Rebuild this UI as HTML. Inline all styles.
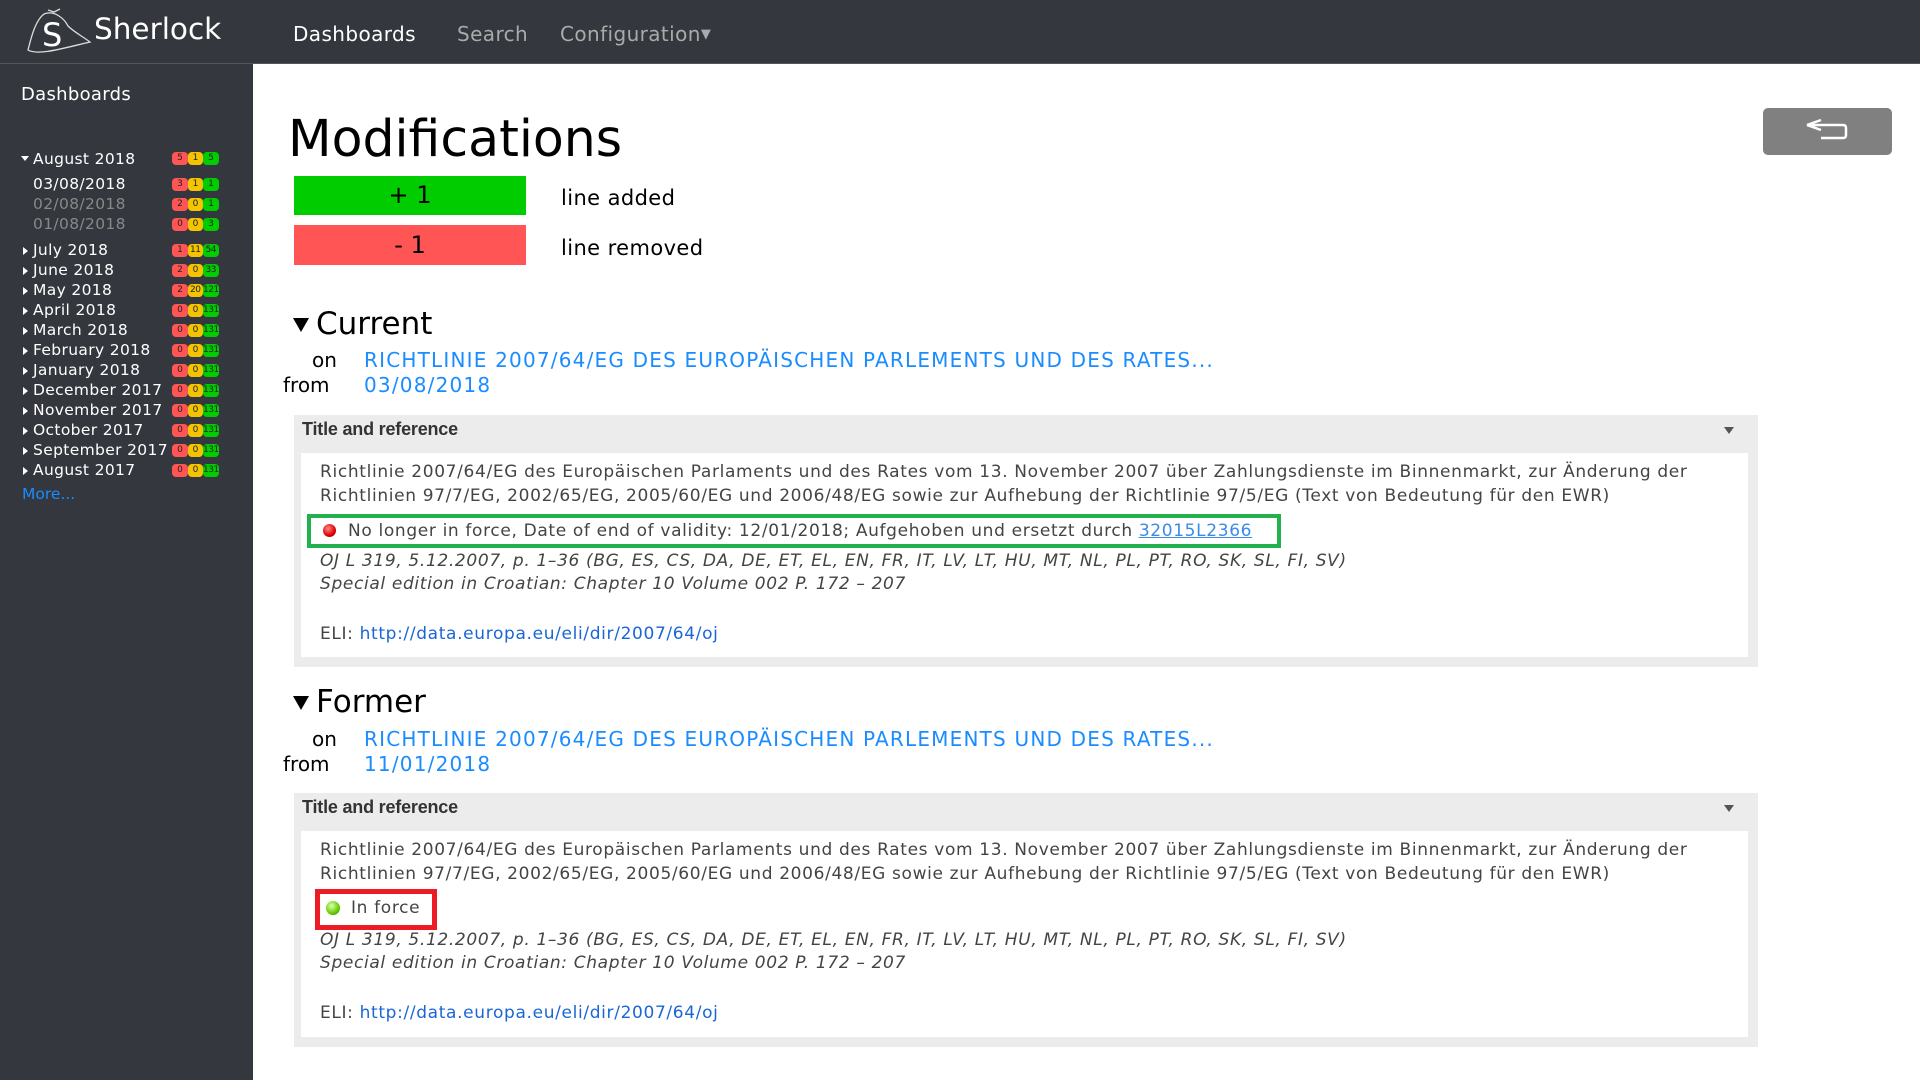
<!DOCTYPE html>
<html><head><meta charset="utf-8"><style>
*{box-sizing:border-box;margin:0;padding:0}
body{width:1920px;height:1080px;overflow:hidden;background:#fff;font-family:"DejaVu Sans","Liberation Sans",sans-serif;position:relative}
.hdr{position:absolute;left:0;top:0;width:1920px;height:64px;background:#34373d;border-bottom:1px solid #555}
.side{position:absolute;left:0;top:64px;width:253px;height:1016px;background:#34373d}
.a{position:absolute;white-space:nowrap}
.nav{color:#fff;font-size:20px;top:22px;letter-spacing:0.4px}
.mi{color:#fff;font-size:15.5px;left:33px;letter-spacing:0.35px}
.mi.t:before{content:"";position:absolute;left:-10px;top:6px;border-left:5px solid #fff;border-top:4px solid transparent;border-bottom:4px solid transparent}
.bd{position:absolute;left:172px;display:flex}
.bd span{width:15.5px;height:13px;border-radius:4px;font-size:9px;line-height:13px;text-align:center;color:#222;letter-spacing:-0.5px}
.r{background:#f55}.y{background:#f5c400}.g{background:#0c0}
.panel{position:absolute;left:294px;width:1464px;background:#ececec}
.ph{height:30px;font:bold 18px "Liberation Sans Narrow","Liberation Sans",sans-serif;color:#333;padding:4px 8px;letter-spacing:-0.2px}
.pb{position:absolute;left:7px;right:10px;top:38px;bottom:10px;background:#fff}
.tx{position:absolute;font-size:17px;color:#444;white-space:nowrap;letter-spacing:0.65px}
.it{font-style:italic}
.lk{color:#1a66d6}
.bl{color:#1a8cff;letter-spacing:1.2px}
.caret{position:absolute;right:24px;top:12px;border-top:7px solid #555;border-left:5px solid transparent;border-right:5px solid transparent}
</style></head><body>
<div class="hdr"></div>
<svg class="a" style="left:24px;top:6px" width="70" height="52" viewBox="0 0 70 52"><path d="M20 8 C12 14 8 28 4 44 C14 50 40 42 66 36 C58 30 50 26 44 20 C40 12 30 4 20 8 Z" fill="none" stroke="#ddd" stroke-width="1.3"/><path d="M24 4 l6 2 l6 -3" fill="none" stroke="#ddd" stroke-width="1.3"/><text x="18" y="40" fill="#fff" font-size="32" font-family="DejaVu Sans">S</text></svg>
<div class="a" style="left:94px;top:12px;color:#fff;font-size:29.5px">Sherlock</div>
<div class="a nav" style="left:293px">Dashboards</div>
<div class="a nav" style="left:457px;color:#aaa">Search</div>
<div class="a nav" style="left:560px;color:#aaa">Configuration<span style="font-size:13px;position:relative;top:-3px">▼</span></div>
<div class="side"></div>
<div class="a" style="left:21px;top:84px;color:#fff;font-size:18px;letter-spacing:0.3px">Dashboards</div>
<div class="a mi" style="top:150px"><span style="position:absolute;left:-12px;top:6px;border-top:5px solid #fff;border-left:4px solid transparent;border-right:4px solid transparent"></span>August 2018</div>
<div class="bd" style="top:152px"><span class="r">5</span><span class="y">1</span><span class="g">5</span></div>
<div class="a mi" style="top:175px">03/08/2018</div><div class="bd" style="top:178px"><span class="r">3</span><span class="y">1</span><span class="g">1</span></div>
<div class="a mi" style="top:195px;color:#888">02/08/2018</div><div class="bd" style="top:198px"><span class="r">2</span><span class="y">0</span><span class="g">1</span></div>
<div class="a mi" style="top:215px;color:#888">01/08/2018</div><div class="bd" style="top:218px"><span class="r">0</span><span class="y">0</span><span class="g">3</span></div>
<div class="a mi t" style="top:241px">July 2018</div><div class="bd" style="top:244px"><span class="r">1</span><span class="y">11</span><span class="g">54</span></div>
<div class="a mi t" style="top:261px">June 2018</div><div class="bd" style="top:264px"><span class="r">2</span><span class="y">0</span><span class="g">33</span></div>
<div class="a mi t" style="top:281px">May 2018</div><div class="bd" style="top:284px"><span class="r">2</span><span class="y">20</span><span class="g">121</span></div>
<div class="a mi t" style="top:301px">April 2018</div><div class="bd" style="top:304px"><span class="r">0</span><span class="y">0</span><span class="g">131</span></div>
<div class="a mi t" style="top:321px">March 2018</div><div class="bd" style="top:324px"><span class="r">0</span><span class="y">0</span><span class="g">131</span></div>
<div class="a mi t" style="top:341px">February 2018</div><div class="bd" style="top:344px"><span class="r">0</span><span class="y">0</span><span class="g">131</span></div>
<div class="a mi t" style="top:361px">January 2018</div><div class="bd" style="top:364px"><span class="r">0</span><span class="y">0</span><span class="g">131</span></div>
<div class="a mi t" style="top:381px">December 2017</div><div class="bd" style="top:384px"><span class="r">0</span><span class="y">0</span><span class="g">131</span></div>
<div class="a mi t" style="top:401px">November 2017</div><div class="bd" style="top:404px"><span class="r">0</span><span class="y">0</span><span class="g">131</span></div>
<div class="a mi t" style="top:421px">October 2017</div><div class="bd" style="top:424px"><span class="r">0</span><span class="y">0</span><span class="g">131</span></div>
<div class="a mi t" style="top:441px">September 2017</div><div class="bd" style="top:444px"><span class="r">0</span><span class="y">0</span><span class="g">131</span></div>
<div class="a mi t" style="top:461px">August 2017</div><div class="bd" style="top:464px"><span class="r">0</span><span class="y">0</span><span class="g">131</span></div>
<div class="a" style="left:22px;top:485px;color:#1a8cff;font-size:15.5px">More...</div>

<div class="a" style="left:288px;top:109px;font-size:50.5px;color:#000">Modifications</div>
<div class="a" style="left:1763px;top:108px;width:129px;height:47px;background:#808080;border-radius:5px"><svg width="129" height="47"><path d="M44 17 L58 12 M44 17 L58 22 M44 17 H80 Q83 17 83 20 V27 Q83 30 80 30 H58" fill="none" stroke="#fff" stroke-width="2.5"/></svg></div>
<div class="a" style="left:294px;top:176px;width:232px;height:39px;background:#0c0;text-align:center;font-size:24px;line-height:39px">+ 1</div>
<div class="a" style="left:294px;top:225px;width:232px;height:40px;background:#f55;text-align:center;font-size:24px;line-height:40px">- 1</div>
<div class="a" style="left:561px;top:186px;font-size:21px;letter-spacing:0.4px">line added</div>
<div class="a" style="left:561px;top:236px;font-size:21px;letter-spacing:0.4px">line removed</div>

<div class="a" style="left:293px;top:318px;border-top:14px solid #000;border-left:8px solid transparent;border-right:8px solid transparent"></div>
<div class="a" style="left:316px;top:306px;font-size:31px">Current</div>
<div class="a" style="left:312px;top:348px;font-size:20px">on</div>
<div class="a" style="left:283px;top:373px;font-size:20px">from</div>
<div class="a bl" style="left:364px;top:348px;font-size:20px">RICHTLINIE 2007/64/EG DES EUROPÄISCHEN PARLEMENTS UND DES RATES...</div>
<div class="a bl" style="left:364px;top:373px;font-size:20px">03/08/2018</div>
<div class="panel" style="top:415px;height:252px"><div class="ph">Title and reference</div><div class="caret"></div><div class="pb"></div>
<div class="tx" style="left:26px;top:47px">Richtlinie 2007/64/EG des Europäischen Parlaments und des Rates vom 13. November 2007 über Zahlungsdienste im Binnenmarkt, zur Änderung der</div>
<div class="tx" style="left:26px;top:71px">Richtlinien 97/7/EG, 2002/65/EG, 2005/60/EG und 2006/48/EG sowie zur Aufhebung der Richtlinie 97/5/EG (Text von Bedeutung für den EWR)</div>
<div class="a" style="left:13px;top:99px;width:974px;height:34px;border:4px solid #22b14c"></div>
<div class="a" style="left:29px;top:109px;width:13px;height:13px;border-radius:50%;background:radial-gradient(circle at 40% 35%,#f88,#d00 60%,#800)"></div>
<div class="tx" style="left:54px;top:106px">No longer in force, Date of end of validity: 12/01/2018; Aufgehoben und ersetzt durch <span style="color:#3a8be8;text-decoration:underline">32015L2366</span></div>
<div class="tx it" style="left:26px;top:136px">OJ L 319, 5.12.2007, p. 1–36 (BG, ES, CS, DA, DE, ET, EL, EN, FR, IT, LV, LT, HU, MT, NL, PL, PT, RO, SK, SL, FI, SV)</div>
<div class="tx it" style="left:26px;top:159px">Special edition in Croatian: Chapter 10 Volume 002 P. 172 – 207</div>
<div class="tx" style="left:26px;top:209px">ELI: <span class="lk">http://data.europa.eu/eli/dir/2007/64/oj</span></div>
</div>

<div class="a" style="left:293px;top:696px;border-top:14px solid #000;border-left:8px solid transparent;border-right:8px solid transparent"></div>
<div class="a" style="left:316px;top:684px;font-size:31px">Former</div>
<div class="a" style="left:312px;top:727px;font-size:20px">on</div>
<div class="a" style="left:283px;top:752px;font-size:20px">from</div>
<div class="a bl" style="left:364px;top:727px;font-size:20px">RICHTLINIE 2007/64/EG DES EUROPÄISCHEN PARLEMENTS UND DES RATES...</div>
<div class="a bl" style="left:364px;top:752px;font-size:20px">11/01/2018</div>
<div class="panel" style="top:793px;height:254px"><div class="ph">Title and reference</div><div class="caret"></div><div class="pb"></div>
<div class="tx" style="left:26px;top:47px">Richtlinie 2007/64/EG des Europäischen Parlaments und des Rates vom 13. November 2007 über Zahlungsdienste im Binnenmarkt, zur Änderung der</div>
<div class="tx" style="left:26px;top:71px">Richtlinien 97/7/EG, 2002/65/EG, 2005/60/EG und 2006/48/EG sowie zur Aufhebung der Richtlinie 97/5/EG (Text von Bedeutung für den EWR)</div>
<div class="a" style="left:21px;top:96px;width:122px;height:41px;border:5px solid #ed1c24"></div>
<div class="a" style="left:32px;top:108px;width:14px;height:14px;border-radius:50%;background:radial-gradient(circle at 40% 35%,#dfa,#6c0 60%,#360)"></div>
<div class="tx" style="left:57px;top:105px">In force</div>
<div class="tx it" style="left:26px;top:137px">OJ L 319, 5.12.2007, p. 1–36 (BG, ES, CS, DA, DE, ET, EL, EN, FR, IT, LV, LT, HU, MT, NL, PL, PT, RO, SK, SL, FI, SV)</div>
<div class="tx it" style="left:26px;top:160px">Special edition in Croatian: Chapter 10 Volume 002 P. 172 – 207</div>
<div class="tx" style="left:26px;top:210px">ELI: <span class="lk">http://data.europa.eu/eli/dir/2007/64/oj</span></div>
</div>
</body></html>
